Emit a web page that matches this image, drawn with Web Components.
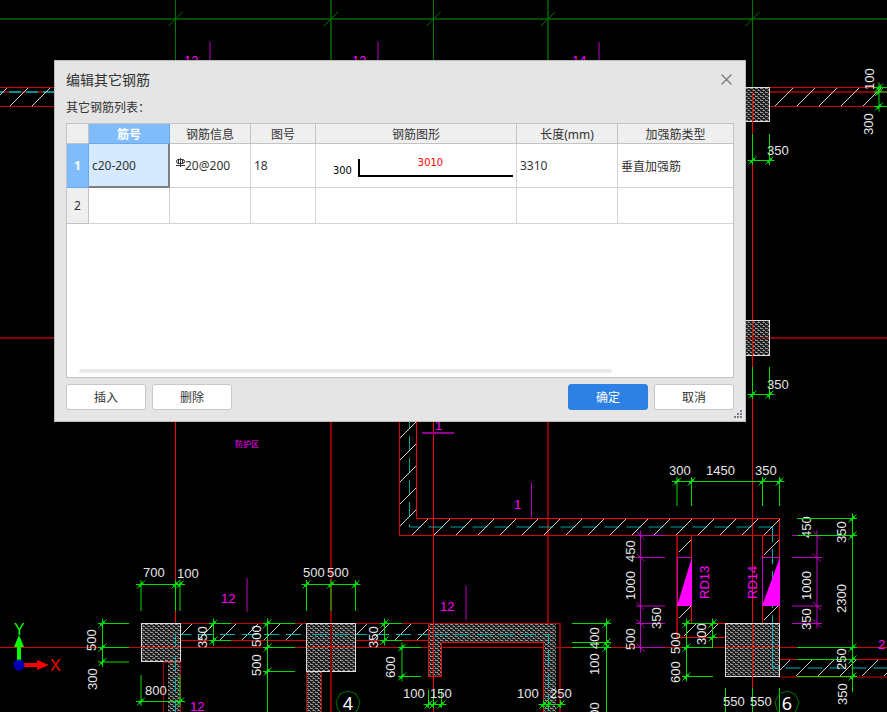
<!DOCTYPE html>
<html lang="zh-CN">
<head>
<meta charset="utf-8">
<title>编辑其它钢筋</title>
<style>
    body {
        margin: 0;
        min-height: 100vh;
        background: #000;
        overflow: hidden;
        font-family: "Noto Sans", "Noto Sans CJK SC", sans-serif;
        font-size: 12px;
        color: #333;
    }
    rebar-dialog {
        position: absolute;
        left: 54px;
        right: 141px;
        top: 60px;
    }
</style>
</head>
<body>
<cad-canvas></cad-canvas>
<rebar-dialog>
    <span slot="title">编辑其它钢筋</span>
    <span slot="caption">其它钢筋列表：</span>
    <rebar-table></rebar-table>
    <flat-button slot="edit">插入</flat-button>
    <flat-button slot="edit">删除</flat-button>
    <flat-button slot="finish" primary>确定</flat-button>
    <flat-button slot="finish">取消</flat-button>
</rebar-dialog>

<script>
const makeTemplate = (html) => {
    const template = document.createElement('template');
    template.innerHTML = html;
    return template;
};

/* ---------- drawing behind the dialog ---------- */

const canvasTemplate = makeTemplate(`
    <style>
        :host {
            display: block;
            height: 100vh;
            background: #000;
        }
        svg {
            display: block;
            width: 100%;
            height: 100%;
        }
        text {
            font-family: "Liberation Sans", sans-serif;
            font-size: 13px;
            fill: #e6e6e6;
        }
        text.mark { fill: #f0f; }
        text.zone { font: 8px "Noto Sans CJK SC", sans-serif; fill: #f0f; }
        text.axis { font: 18px "Noto Sans", sans-serif; fill: #fff; }
        text.x { fill: #f00; font-size: 16px; }
        text.y { fill: #0f0; font-size: 16px; }
    </style>
    <svg>
        <defs>
            <pattern id="concrete" width="5" height="4" patternUnits="userSpaceOnUse">
                <rect width="5" height="4" fill="#1c1c1c"/>
                <path d="M0 .5h3M2.500 2.500h2.500" stroke="#969696"/>
                <path d="M3 1.500h1M0 3.500h1" stroke="#666"/>
            </pattern>
        </defs>
        <g id="drawing"></g>
    </svg>
`);

const RED = '#f00';
const DARK_RED = '#8b0000';
const GREEN = '#0d0';
const MAGENTA = '#c000c0';
const CYAN = '#00b4b4';

const line = (x1, y1, x2, y2, color, width = 1) =>
    `<path d="M${x1} ${y1}L${x2} ${y2}" stroke="${color}" stroke-width="${width}" fill="none"/>`;
const poly = (points, color, extra = '') =>
    `<polyline points="${points}" stroke="${color}" fill="none" ${extra}/>`;
const label = (x, y, text, cls = '') => `<text x="${x}" y="${y}" class="${cls}">${text}</text>`;
// x is the baseline, y is the lower end of the text
const vlabel = (x, y, text, cls = '') =>
    `<text transform="translate(${x} ${y}) rotate(-90)" class="${cls}">${text}</text>`;
const fill = (x, y, w, h) => `<rect x="${x}" y="${y}" width="${w}" height="${h}" fill="url(#concrete)"/>`;
const column = (x, y, w, h) =>
    `<rect x="${x}" y="${y}" width="${w}" height="${h}" fill="url(#concrete)" stroke="#ddd"/>`;
const tick = (x, y, color) => line(x - 4, y + 4, x + 4, y - 4, color) + line(x - 2, y + 2, x + 2, y - 2, color, 2);

function hatch(x, bottom, count, size = 16, step = 22) {
    let out = '';
    for (let i = 0; i < count; i++) {
        out += line(x + i * step, bottom, x + size + i * step, bottom - size, '#ccc');
    }
    return out;
}

// dimension chain along x: extension lines run from top to bottom
function dimX(y, xs, top, bottom, color = GREEN) {
    return line(xs[0] - 5, y, xs[xs.length - 1] + 5, y, color) +
        xs.map((x) => line(x, top, x, bottom, color) + tick(x, y, color)).join('');
}

// dimension chain along y: extension lines run from left to right
function dimY(x, ys, left, right, color = GREEN, end = 0) {
    return line(x, ys[0] - 5, x, end || ys[ys.length - 1] + 5, color) +
        ys.map((y) => line(left, y, right, y, color) +
            (color === MAGENTA ? line(x - 4, y - 4, x + 4, y + 4, color) : tick(x, y, color))).join('');
}

function axisBubble(x, y, text) {
    const points = [[0, -12], [8, -9], [12, -1], [9, 8], [3, 12], [-4, 12], [-10, 7], [-12, -1], [-8, -9], [0, -12]];
    return poly(points.map(([dx, dy]) => `${x + dx},${y + dy}`).join(' '), '#007800') +
        `<text x="${x}" y="${y + 7}" text-anchor="middle" class="axis">${text}</text>`;
}

const dash = `stroke-dasharray="15 7"`;

function grid() {
    return line(0, 19, 4000, 19, '#004d00', 2) +
        [[175.5, 1], [331, 2], [433.5, 1], [548, 2], [752.5, 1]].map(([x, w]) =>
            line(x, 0, x, 92, w === 2 ? '#004d00' : '#007800', w) +
            line(x, 92, x, 4000, w === 2 ? DARK_RED : RED, w) +
            line(x - 7, 26, x + 7, 12, '#007800')).join('') +
        line(0, 338, 4000, 338, DARK_RED, 2) +
        line(0, 647.5, 4000, 647.5, '#d00000');
}

function topPart() {
    return label(184, 65, '12', 'mark') + line(210, 42, 210, 76, MAGENTA) +
        label(352, 65, '12', 'mark') + line(378, 42, 378, 76, MAGENTA) +
        label(572, 65, '14', 'mark') + line(599, 42, 599, 76, MAGENTA) +
        line(0, 87.5, 4000, 87.5, '#d00000') + line(0, 106.5, 4000, 106.5, '#d00000') +
        line(0, 92, 4000, 92, DARK_RED, 2) +
        `<path d="M-8 92H60" stroke="#009090" stroke-width="2" stroke-dasharray="12 5"/>` +
        line(0, 95, 7, 88, '#ccc') + hatch(10, 106, 2, 18) +
        hatch(775, 106, 5, 18) +
        column(735.5, 87.5, 34, 34) + column(735.5, 320.5, 34, 35) +
        line(752.5, 92, 752.5, 122, RED) + line(752.5, 321, 752.5, 356, RED) +
        line(740, 338, 769, 338, DARK_RED) +
        dimX(160.5, [752.5, 769.5], 134, 165) + label(767, 155, '350') +
        dimX(394.5, [752.5, 769.5], 367, 399) + label(767, 389, '350') +
        dimY(879, [87.5, 92, 106.5], 874, 887) +
        vlabel(874, 90, '100') + vlabel(873, 135, '300');
}

function corridor() {
    let out = poly('399.5,400 399.5,535.500 779,535.500', '#e00000') +
        poly('416.5,400 416.5,518.500 779.5,518.500 779.5,624', RED) +
        poly('409.5,414 409.5,527 772.5,527', '#00a0a0', dash) +
        poly('772.5,527 772.5,668 900,668', CYAN, dash);
    for (let y = 438; y < 530; y += 22) {
        out += line(400, y, 416, y - 16, '#ccc');
    }
    return out + hatch(412, 535, 17) +
        line(422, 433, 454, 433, '#900090', 2) + label(435, 430, '1', 'mark') +
        label(514, 509, '1', 'mark') + line(531.5, 483, 531.5, 517, MAGENTA) +
        label(235, 447, '防护区', 'zone');
}

function shaft() {
    return line(677, 536, 677, 637, '#a00000', 2) + line(691.5, 536, 691.5, 623, RED) +
        line(762.5, 536, 762.5, 623, RED) +
        line(691, 623.5, 726, 623.5, RED) + line(677, 637.5, 726, 637.5, RED) +
        line(679, 552, 691, 540, '#ccc') + line(679, 618, 691, 606, '#ccc') +
        line(684, 636, 696, 624, '#ccc') + line(705, 637, 718, 624, '#ccc') +
        line(764, 555, 779, 540, '#ccc') + line(764, 620, 779, 605, '#ccc') +
        poly('677.5,606 677.5,557.500 691.5,557.500', MAGENTA) +
        poly('762.5,606 762.5,557.500 779.5,557.500', MAGENTA) +
        `<path d="M677 606L692 557V606ZM762 606L780 557V606Z" fill="#f0f"/>` +
        vlabel(709, 599, 'RD13', 'mark') + vlabel(757, 599, 'RD14', 'mark') +
        dimX(481.5, [677, 691.5, 762.5, 779.5], 477, 506) +
        label(669, 475, '300') + label(706, 475, '1450') + label(755, 475, '350') +
        dimY(640.5, [535.5, 557.5, 606, 623.5, 647.5], 636, 665, MAGENTA) +
        vlabel(635, 562, '450') + vlabel(635, 600, '1000') + vlabel(661, 629, '350') + vlabel(635, 650, '500') +
        dimY(817, [535.5, 557.5, 606, 623.5], 792, 822, MAGENTA) +
        vlabel(811, 538, '450') + vlabel(811, 600, '1000') + vlabel(811, 630, '350') +
        line(779, 659.5, 4000, 659.5, '#d00000') + line(779, 677, 4000, 677, '#d00000') +
        hatch(774, 676, 6) +
        dimY(852.5, [518.5, 535.5, 647.5, 659.5, 676.5], 797, 857, GREEN, 692) +
        vlabel(846, 543, '350') + vlabel(846, 613, '2300') + vlabel(846, 670, '250') + vlabel(847, 705, '350') +
        column(725.5, 623.5, 54, 53) +
        line(752.5, 624, 752.5, 677, RED) + line(726, 647.5, 779, 647.5, '#d00000') +
        line(772.5, 624, 772.5, 668, CYAN) + line(772, 668, 779, 668, CYAN) +
        dimY(686.5, [623.5, 647.5, 676.5], 682, 713) +
        vlabel(680, 654, '500') + vlabel(680, 683, '600') +
        dimY(712.5, [623.5, 637.5], 708, 717, GREEN, 647) + vlabel(706, 645, '300') +
        [725.5, 752.5, 779.5].map((x) => line(x, 688, x, 712, GREEN)).join('') +
        label(723, 706, '550') + label(750, 706, '550') +
        axisBubble(787, 703, '6') + label(878, 649, '2', 'mark');
}

function wallBelow() {
    return line(180, 623.5, 560, 623.5, '#c00000') + line(180, 640.5, 428, 640.5, '#e00000') +
        line(182, 634, 192, 624, '#ccc') + hatch(198, 640, 5) +
        line(357, 634, 367, 624, '#ccc') + hatch(373, 640, 2) + line(417, 640, 428, 629, '#ccc') +
        poly('176,634.500 433,634.500', CYAN, dash) +
        // left column with the wall under it
        column(141.5, 623.5, 39, 38) + fill(168, 662, 12, 4000) +
        poly('163.5,4000 163.5,662 180.5,662 180.5,4000', '#b00000') +
        poly('175.5,634 175.5,4000', CYAN, dash) + line(141, 647.5, 180, 647.5, '#d00000') +
        dimX(584.5, [141, 175.5, 180], 580, 611) + label(143, 577, '700') + label(177, 578, '100') +
        dimX(701.5, [141, 180], 675, 706) + label(145, 695, '800') +
        dimY(102.5, [623.5, 647.5, 662], 98, 129) + vlabel(96, 651, '500') + vlabel(97, 690, '300') +
        dimY(213.5, [623.5, 640.5], 209, 231) + vlabel(207, 648, '350') +
        dimY(267.5, [623.5, 647.5, 671.5], 263, 295, GREEN, 4000) +
        vlabel(261, 647, '500') + vlabel(261, 676, '500') +
        label(221, 603, '12', 'mark') + line(247, 578, 247, 612, MAGENTA) + label(190, 711, '12', 'mark') +
        // column on axis 4
        column(306.5, 623.5, 49, 48) + fill(307, 672, 14, 4000) +
        poly('306.5,672 306.5,4000', '#c00000') + poly('321.5,672 321.5,4000', '#c00000') +
        line(331, 624, 331, 672, DARK_RED, 2) + line(307, 647.5, 355, 647.5, '#d00000') +
        poly('312,634.500 355,634.500', CYAN, dash) +
        dimX(584.5, [306.5, 331, 355.5], 580, 611) + label(303, 577, '500') + label(327, 577, '500') +
        dimY(384.5, [623.5, 640.5], 380, 402) + vlabel(378, 648, '350') +
        dimY(402, [647.5, 676.5], 398, 421) + vlabel(395, 678, '600') +
        axisBubble(348, 703, '4') +
        // hook-shaped wall
        fill(428, 624, 128, 18) + fill(428, 642, 13, 34) + fill(543, 642, 13, 4000) +
        poly('543.5,4000 543.5,642.500 441.5,642.500 441.5,676.500 428.5,676.500 428.5,623.500', RED) +
        line(560, 623, 560, 4000, DARK_RED, 2) +
        poly('433,634.500 548.5,634.500 548.5,4000', CYAN, dash) + line(433.5, 624, 433.5, 677, RED) +
        dimX(704.5, [428.5, 433.5, 441.5], 690, 708) + label(403, 698, '100') + label(430, 698, '150') +
        dimX(704.5, [543.5, 548.5, 560.5], 700, 708) + label(517, 698, '100') + label(550, 698, '250') +
        label(440, 611, '12', 'mark') + line(466, 586, 466, 620, MAGENTA) +
        dimY(606.5, [623.5, 642.5, 647.5], 572, 611, GREEN, 4000) +
        vlabel(599, 649, '400') + vlabel(599, 675, '100') + vlabel(599, 724, '400');
}

function ucsIcon() {
    return `<path d="M19 665V644" stroke="#0f0" stroke-width="4"/><path d="M14 647L19 635L24 647Z" fill="#0f0"/>
        <path d="M19 665H39" stroke="#f00" stroke-width="4"/><path d="M37 660L49 665L37 670Z" fill="#f00"/>
        <circle cx="19" cy="665" r="5.500" fill="#0000b4"/>` +
        label(14, 635, 'Y', 'y') + label(50, 671, 'X', 'x');
}

class CadCanvas extends HTMLElement {
    constructor() {
        super();
        this.attachShadow({mode: 'open'});
        this.shadowRoot.appendChild(canvasTemplate.content.cloneNode(true));
        this.shadowRoot.querySelector('#drawing').innerHTML =
            grid() + topPart() + wallBelow() + corridor() + shaft() + ucsIcon();
    }
}

/* ---------- dialog ---------- */

const dialogTemplate = makeTemplate(`
    <style>
        :host {
            display: block;
            box-sizing: border-box;
            padding: 8px 11px 11px;
            border: 1px solid #b9bcb9;
            background: #e5e5e5;
        }
        header {
            display: flex;
            align-items: center;
            justify-content: space-between;
            height: 20px;
            font-size: 14px;
        }
        .close {
            display: flex;
            padding: 2px;
            border: 0;
            background: none;
        }
        .caption {
            height: 34px;
            line-height: 38px;
        }
        footer {
            display: flex;
            justify-content: space-between;
            margin-top: 6px;
        }
        .group {
            display: flex;
            gap: 6px;
        }
        .grip {
            position: absolute;
            right: 2px;
            bottom: 2px;
        }
    </style>
    <header>
        <slot name="title"></slot>
        <button class="close" aria-label="关闭">
            <svg width="11" height="11"><path d="M.5 .5l10 10M10.500 .5l-10 10" stroke="#777" stroke-width="1.200"/></svg>
        </button>
    </header>
    <div class="caption"><slot name="caption"></slot></div>
    <slot></slot>
    <footer>
        <div class="group"><slot name="edit"></slot></div>
        <div class="group"><slot name="finish"></slot></div>
    </footer>
    <svg class="grip" width="9" height="9" fill="#7a7f8a">
        <path d="M6 0h2v2h-2zM3 3h2v2h-2zM6 3h2v2h-2zM0 6h2v2h-2zM3 6h2v2h-2zM6 6h2v2h-2z"/>
    </svg>
`);

class RebarDialog extends HTMLElement {
    constructor() {
        super();
        this.attachShadow({mode: 'open'});
        this.shadowRoot.appendChild(dialogTemplate.content.cloneNode(true));
    }
}

const buttonTemplate = makeTemplate(`
    <style>
        :host { display: block; }
        button {
            display: block;
            width: 80px;
            height: 26px;
            padding: 0;
            border: 1px solid #c8c8c8;
            border-radius: 3px;
            background: #fff;
            color: #333;
            font: inherit;
        }
        :host([primary]) button {
            border-color: #2d80e4;
            background: #2d80e4;
            color: #fff;
        }
    </style>
    <button><slot></slot></button>
`);

class FlatButton extends HTMLElement {
    constructor() {
        super();
        this.attachShadow({mode: 'open'});
        this.shadowRoot.appendChild(buttonTemplate.content.cloneNode(true));
    }
}

/* ---------- table ---------- */

const tableTemplate = makeTemplate(`
    <style>
        :host {
            display: flex;
            flex-direction: column;
            justify-content: space-between;
            box-sizing: border-box;
            min-height: 255px;
            border: 1px solid #c3c3c3;
            background: #fff;
        }
        table {
            width: 100%;
            table-layout: fixed;
            border-collapse: separate;
            border-spacing: 0;
        }
        th, td {
            box-sizing: border-box;
            padding: 0 3px;
            border-right: 1px solid #d4d4d4;
            border-bottom: 1px solid #d4d4d4;
            text-align: left;
            white-space: nowrap;
        }
        th {
            padding: 0;
            border-color: #c3c3c3;
            background: #efefef;
            font-weight: normal;
            text-align: center;
        }
        tr > :last-child { border-right: 0; }
        thead th {
            height: 20px;
            padding-top: 2px;
            line-height: 17px;
        }
        .first > * { height: 44px; }
        .second > * { height: 36px; }
        th.current {
            border-color: #6ba9ee;
            background: #80bbfa;
            color: #fff;
            font-weight: bold;
        }
        td.current {
            border-right: 2px solid #808080;
            border-bottom: 2px solid #808080;
            background: #d6eaff;
        }
        .info {
            display: flex;
            align-items: flex-start;
            padding-left: 2px;
        }
        .bar {
            width: 80%;
            height: 4px;
            margin: 0 12px 4px;
            border-radius: 2px;
            background: #ebebeb;
        }
    </style>
    <table>
        <colgroup>
            <col style="width: 22px"><col style="width: 81px"><col style="width: 81px"><col style="width: 65px">
            <col style="width: 201px"><col style="width: 101px"><col>
        </colgroup>
        <thead>
            <tr>
                <th></th><th class="current">筋号</th><th>钢筋信息</th><th>图号</th>
                <th>钢筋图形</th><th>长度(mm)</th><th>加强筋类型</th>
            </tr>
        </thead>
        <tbody>
            <tr class="first">
                <th class="current">1</th>
                <td class="current">c20-200</td>
                <td>
                    <div class="info">
                        <svg width="10" height="12" fill="none" stroke="#333">
                            <path d="M5.500 1v9M1 8.500h9M3.500 2.500h4M3.500 2.500q-2 0-2 2t2 2h4q2 0 2-2t-2-2M3.500 2v5M7.500 2v5"/>
                        </svg>
                        <span>20@200</span>
                    </div>
                </td>
                <td>18</td>
                <td><rebar-shape hook="300" length="3010"></rebar-shape></td>
                <td>3310</td>
                <td>垂直加强筋</td>
            </tr>
            <tr class="second"><th>2</th><td></td><td></td><td></td><td></td><td></td><td></td></tr>
        </tbody>
    </table>
    <div class="bar"></div>
`);

class RebarTable extends HTMLElement {
    constructor() {
        super();
        this.attachShadow({mode: 'open'});
        this.shadowRoot.appendChild(tableTemplate.content.cloneNode(true));
    }
}

const shapeTemplate = makeTemplate(`
    <style>
        :host {
            display: flex;
            align-items: flex-end;
            gap: 6px;
            padding: 4px 0 0 14px;
            font: 11px "DejaVu Sans Condensed", "DejaVu Sans", sans-serif;
            color: #000;
        }
        .bend {
            flex: 1;
            height: 16px;
            padding-right: 12px;
            border-left: 2px solid #000;
            border-bottom: 2px solid #000;
            line-height: 8px;
            text-align: center;
            color: #f00;
        }
    </style>
    <span id="hook"></span>
    <div class="bend" id="length"></div>
`);

class RebarShape extends HTMLElement {
    constructor() {
        super();
        this.attachShadow({mode: 'open'});
        this.shadowRoot.appendChild(shapeTemplate.content.cloneNode(true));
        this.shadowRoot.querySelector('#hook').textContent = this.getAttribute('hook');
        this.shadowRoot.querySelector('#length').textContent = this.getAttribute('length');
    }
}

window.customElements.define('cad-canvas', CadCanvas);
window.customElements.define('rebar-shape', RebarShape);
window.customElements.define('rebar-table', RebarTable);
window.customElements.define('flat-button', FlatButton);
window.customElements.define('rebar-dialog', RebarDialog);
</script>
</body>
</html>
